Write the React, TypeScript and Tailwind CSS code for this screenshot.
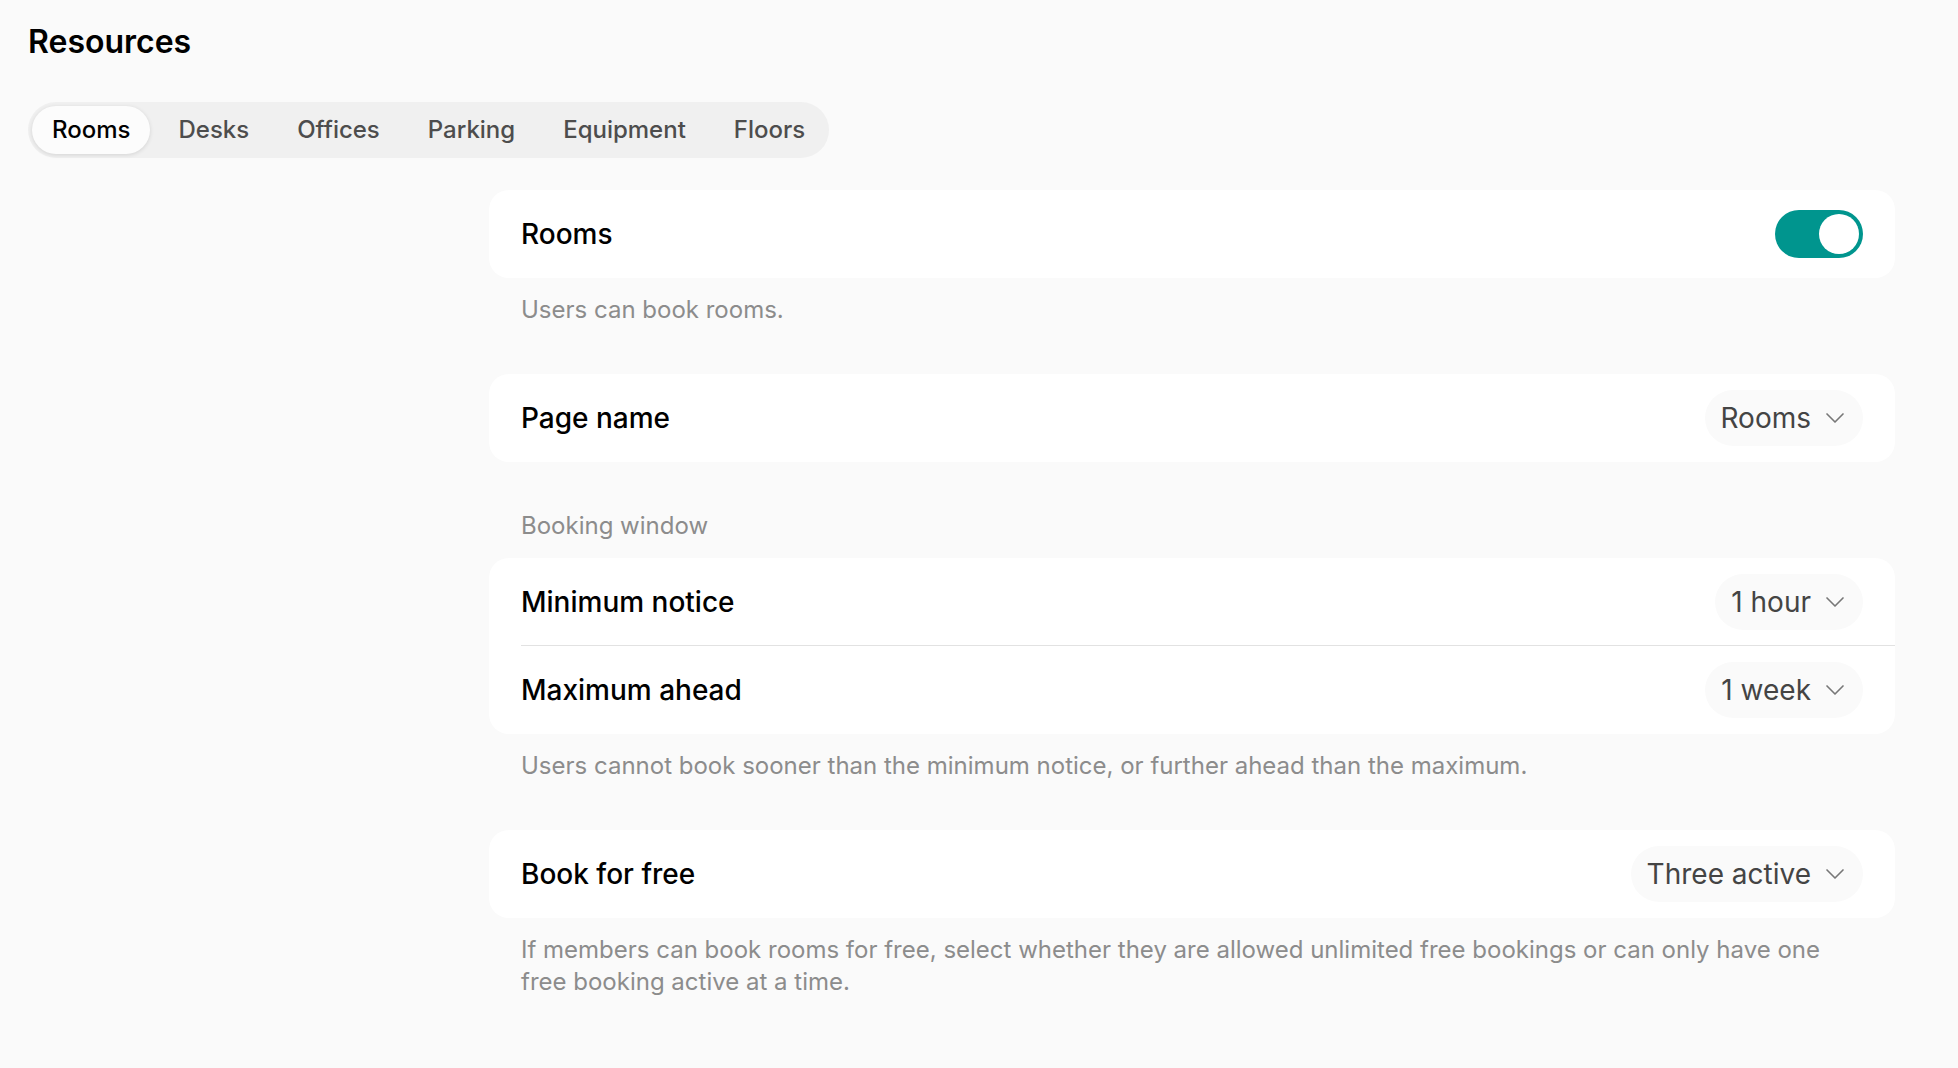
import { FC, ReactNode } from "react";
import { ChevronDown } from "lucide-react";

const TABS = ["Rooms", "Desks", "Offices", "Parking", "Equipment", "Floors"];

const Select: FC<{ value: string }> = ({ value }) => (
  <div className="flex h-14 items-center rounded-full bg-[#fafafa] pl-4 pr-3 text-[28px] leading-9 text-[#444444]">
    <span>{value}</span>
    <ChevronDown size={32} strokeWidth={1.25} className="ml-2 text-[#777777]" />
  </div>
);

const Row: FC<{ label: string; children: ReactNode; divided?: boolean }> = ({
  label,
  children,
  divided,
}) => (
  <div className="pl-8">
    <div
      className={
        "flex h-[88px] items-center justify-between pr-8 " +
        (divided ? "border-b border-[#e2e2e2]" : "")
      }
    >
      <span className="text-[28px] font-medium leading-9 text-black">{label}</span>
      {children}
    </div>
  </div>
);

const Note: FC<{ children: ReactNode }> = ({ children }) => (
  <p className="px-8 pt-4 text-2xl leading-8 text-[#8c8c8c]">{children}</p>
);

const Card: FC<{ children: ReactNode }> = ({ children }) => (
  <div className="overflow-hidden rounded-[20px] bg-white">{children}</div>
);

export default function App() {
  return (
    <div className="min-h-[1068px] bg-[#fafafa] font-['Inter',sans-serif]">
      <div className="px-[28px] pt-6">
        <h1 className="text-[32px] font-semibold leading-9 text-black">Resources</h1>
        <div className="mt-[42px] inline-flex h-14 items-center gap-2 rounded-full bg-[#f0f0f0] pl-1 pr-1 text-2xl font-medium leading-8">
          {TABS.map((tab, i) => (
            <div
              key={tab}
              className={
                i === 0
                  ? "flex h-12 items-center rounded-full bg-[#fcfcfc] px-5 text-black shadow-[0_1px_4px_rgba(0,0,0,0.12)]"
                  : "flex h-12 items-center px-5 text-[#4d4d4d]"
              }
            >
              {tab}
            </div>
          ))}
        </div>
      </div>

      <div className="ml-[489px] mt-8 w-[1406px] pb-[70px]">
        <Card>
          <Row label="Rooms">
            <div className="flex h-12 w-[88px] items-center justify-end rounded-full bg-[#00958e] pr-1">
              <div className="h-10 w-10 rounded-full bg-white" />
            </div>
          </Row>
        </Card>
        <Note>Users can book rooms.</Note>

        <div className="mt-12">
          <Card>
            <Row label="Page name">
              <Select value="Rooms" />
            </Row>
          </Card>
        </div>

        <p className="mt-12 px-8 pb-4 text-2xl leading-8 text-[#8c8c8c]">Booking window</p>
        <Card>
          <Row label="Minimum notice" divided>
            <Select value="1 hour" />
          </Row>
          <Row label="Maximum ahead">
            <Select value="1 week" />
          </Row>
        </Card>
        <Note>
          Users cannot book sooner than the minimum notice, or further ahead than the maximum.
        </Note>

        <div className="mt-12">
          <Card>
            <Row label="Book for free">
              <Select value="Three active" />
            </Row>
          </Card>
        </div>
        <Note>
          If members can book rooms for free, select whether they are allowed unlimited free
          bookings or can only have one free booking active at a time.
        </Note>
      </div>
    </div>
  );
}
